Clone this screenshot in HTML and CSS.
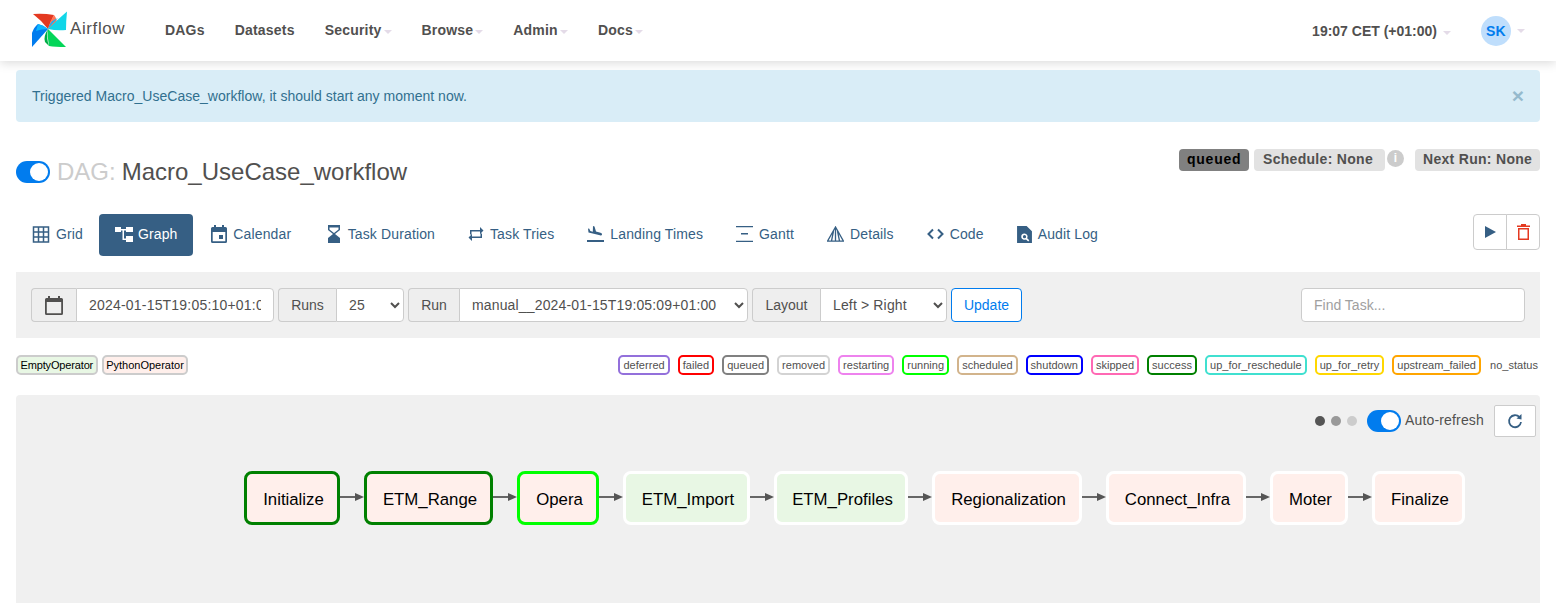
FILE: index.html
```html
<!DOCTYPE html>
<html lang="en">
<head>
  <meta charset="UTF-8" />
  <title>Macro_UseCase_workflow - Graph - Airflow</title>
  <link rel="stylesheet" href="styles.css">
</head>
<body>
  <nav class="navbar">
    <a class="brand">
      <svg class="logo" viewBox="0 0 36 36" width="36" height="36">
        <path fill="#e43921" d="M2 3 Q12 2 23 4 Q20 10 17 18 Q10 9 2 3Z"/>
        <path fill="#ff7557" d="M23 4 Q27 9 25 12 Q21 15 17 18 Q19 10 23 4Z"/>
        <path fill="#11d6e8" d="M36 .5 Q35 10 35 19 Q26 20 17 18 Q26 9 36 .5Z"/>
        <path fill="#0cb6ff" d="M27 7 Q21 12 17 18 Q19 11 23 9Z"/>
        <path fill="#04d659" d="M35 36 Q24 36 18 35 Q16 26 17 18 Q26 27 35 36Z"/>
        <path fill="#00ad46" d="M18 35 Q15 27 17 18 Q12 26 14 31Z"/>
        <path fill="#017cee" d="M1 36 Q1 29 1 22 Q3 16 7 13 Q12 14 17 18 Q9 27 1 36Z"/>
        <path fill="#0cb6ff" d="M7 13 Q12 14 17 18 Q10 18 5 20Z"/>
      </svg>
      <span class="brand-name">Airflow</span>
    </a>
    <ul class="menu">
      <li>DAGs</li>
      <li>Datasets</li>
      <li>Security<i class="caret"></i></li>
      <li>Browse<i class="caret"></i></li>
      <li>Admin<i class="caret"></i></li>
      <li>Docs<i class="caret"></i></li>
    </ul>
    <div class="nav-right">
      <span class="clock">19:07 CET (+01:00)<i class="caret caret-wide"></i></span>
      <span class="avatar">SK</span><i class="caret caret-wide"></i>
    </div>
  </nav>

  <main class="container">
    <div class="alert">
      <span>Triggered Macro_UseCase_workflow, it should start any moment now.</span>
      <span class="alert-close">&times;</span>
    </div>

    <header class="dag-header">
      <h1 class="dag-title">
        <span class="toggle"><span class="knob"></span></span>
        <span class="dag-prefix">DAG:</span> Macro_UseCase_workflow
      </h1>
      <div class="dag-meta">
        <span class="tag tag-queued">queued</span>
        <span class="tag tag-schedule">Schedule: None</span>
        <span class="info">i</span>
        <span class="tag tag-next">Next Run: None</span>
      </div>
    </header>

    <div class="tabs-row">
      <ul class="tabs">
        <li class="tab">
          <svg viewBox="0 0 18 18" width="18" height="18"><path fill="none" stroke="currentColor" stroke-width="1.5" d="M1.5 2h15v15h-15zM6.5 2v15M11.5 2v15M1.500 7h15M1.500 12h15"/></svg>
          Grid
        </li>
        <li class="tab active">
          <svg viewBox="0 0 18 16" width="18" height="16"><path fill="currentColor" d="M0 1h6v5H0zM11 1h7v5h-7zM11 10h7v6h-7zM6 3h5v1.500H9v8h2V14H7.500V4.500H6z"/></svg>
          Graph
        </li>
        <li class="tab">
          <svg class="icon-shift" viewBox="0 0 16 18" width="16" height="18"><path fill="currentColor" fill-rule="evenodd" d="M3 0h2v2h6V0h2v2h1.500Q16 2 16 3.500v13Q16 18 14.500 18h-13Q0 18 0 16.500v-13Q0 2 1.500 2H3zM1.700 7v9.300h12.600V7zM8 10h4v4H8z"/></svg>
          Calendar
        </li>
        <li class="tab">
          <svg class="icon-glass" viewBox="0 0 14 18" width="14" height="18"><path fill="currentColor" fill-rule="evenodd" d="M1 0h12v5L8 9l5 4v5H1v-5l5-4-5-4zM2.500 2.500v2l4.500 3.500 4.500-3.500v-2z"/></svg>
          Task Duration
        </li>
        <li class="tab">
          <svg viewBox="0 0 16 16" width="16" height="16"><path fill="currentColor" d="M2 4h10V1l3.500 3.500L12 8V5.500H3.500v3H2zM14 12H4v3L.5 11.500 4 8v2.500h8.500v-3H14z"/></svg>
          Task Tries
        </li>
        <li class="tab">
          <svg viewBox="0 0 17 16" width="17" height="16"><path fill="currentColor" d="M0 14h17v2H0zM6 0l1.500.5 1.500 5 4.500 1.300q2 .6 1.500 2-.4 1-2 .5L1.500 6.500l-.5-4 1.300.3 1 2.200 2.500.7z"/></svg>
          Landing Times
        </li>
        <li class="tab">
          <svg viewBox="0 0 17 16" width="17" height="16"><path fill="currentColor" d="M0 0h17v1.200H0zM5 7h7v1.500H5zM0 14.800h17V16H0z"/></svg>
          Gantt
        </li>
        <li class="tab">
          <svg viewBox="0.5 0 17 16" width="17" height="16"><path fill="none" stroke="currentColor" stroke-width="1.300" d="M9 1L1 15.200h16zM9 1v14.200M7 5l-2 10M11 5l2 10"/></svg>
          Details
        </li>
        <li class="tab">
          <svg viewBox="1 0 16 12" width="17" height="12"><path fill="none" stroke="currentColor" stroke-width="2" d="M6.500 1.500L2 6l4.500 4.500M11.500 1.500L16 6l-4.500 4.500"/></svg>
          Code
        </li>
        <li class="tab">
          <svg viewBox="0 0 14 16" width="15" height="17"><path fill="currentColor" fill-rule="evenodd" d="M0 0h9l5 5v11H0zM7 7a3 3 0 1 0 1.400 5.600L10.500 14.500l1-1-2-2A3 3 0 0 0 7 7zM7 8.500a1.500 1.500 0 1 1 0 3 1.500 1.500 0 0 1 0-3z"/></svg>
          Audit Log
        </li>
      </ul>
      <div class="actions">
        <button class="action-btn" type="button">
          <svg viewBox="0 0 11 12" width="11" height="12"><path fill="#365f84" d="M0 0l11 6-11 6z"/></svg>
        </button>
        <button class="action-btn" type="button">
          <svg viewBox="0 0 13 16" width="13" height="16"><path fill="#e43921" fill-rule="evenodd" d="M4 0h5v1.500h4V3H0V1.500h4zM1 4h11v12H1zM2.500 5.500v9h8v-9z"/></svg>
        </button>
      </div>
    </div>

    <form class="toolbar">
      <div class="input-group group-date">
        <span class="addon addon-icon">
          <svg viewBox="0 0 18 19" width="18" height="19"><path fill="#51504f" fill-rule="evenodd" d="M3 0h2v2h8V0h2v2h1.500Q18 2 18 3.500v14q0 1.500-1.500 1.500h-15Q0 19 0 17.500v-14Q0 2 1.500 2H3zM1.800 6v11.200h14.400V6z"/></svg>
        </span>
        <input class="field" type="text" value="2024-01-15T19:05:10+01:00">
      </div>
      <div class="input-group group-runs">
        <span class="addon">Runs</span>
        <select class="field"><option>25</option></select>
      </div>
      <div class="input-group group-run">
        <span class="addon">Run</span>
        <select class="field"><option>manual__2024-01-15T19:05:09+01:00</option></select>
      </div>
      <div class="input-group group-layout">
        <span class="addon">Layout</span>
        <select class="field"><option>Left &gt; Right</option></select>
      </div>
      <button class="update-btn" type="button">Update</button>
      <input class="find-task" type="text" placeholder="Find Task...">
    </form>

    <div class="legend">
      <div class="legend-group">
        <span class="legend-op op-empty">EmptyOperator</span>
        <span class="legend-op op-python">PythonOperator</span>
      </div>
      <div class="legend-group legend-states">
        <span class="state" style="border-color: mediumpurple">deferred</span>
        <span class="state" style="border-color: red">failed</span>
        <span class="state" style="border-color: gray">queued</span>
        <span class="state" style="border-color: lightgrey">removed</span>
        <span class="state" style="border-color: violet">restarting</span>
        <span class="state" style="border-color: lime">running</span>
        <span class="state" style="border-color: tan">scheduled</span>
        <span class="state" style="border-color: blue">shutdown</span>
        <span class="state" style="border-color: hotpink">skipped</span>
        <span class="state" style="border-color: green">success</span>
        <span class="state" style="border-color: turquoise">up_for_reschedule</span>
        <span class="state" style="border-color: gold">up_for_retry</span>
        <span class="state" style="border-color: orange">upstream_failed</span>
        <span class="state no-status">no_status</span>
      </div>
    </div>

    <section class="graph-panel">
      <div class="refresh-row">
        <span class="dot dot-1"></span>
        <span class="dot dot-2"></span>
        <span class="dot dot-3"></span>
        <span class="toggle toggle-refresh"><span class="knob"></span></span>
        <span class="refresh-label">Auto-refresh</span>
        <button class="refresh-btn" type="button">
          <svg viewBox="0 0 16 16" width="16" height="16"><path fill="none" stroke="#365f84" stroke-width="1.800" d="M12.500 4.200A6 6 0 1 0 14 9"/><path fill="#365f84" d="M9.500 5.500L14.500 1v5.500z"/></svg>
        </button>
      </div>
      <div class="graph">
        <div class="node node-python st-success w-initialize">Initialize</div>
        <svg class="edge" viewBox="0 0 24 10" width="24" height="10"><path stroke="#666" stroke-width="2" d="M0 5h17"/><path fill="#555" d="M15 1l9 4-9 4z"/></svg>
        <div class="node node-python st-success w-range">ETM_Range</div>
        <svg class="edge" viewBox="0 0 24 10" width="24" height="10"><path stroke="#666" stroke-width="2" d="M0 5h17"/><path fill="#555" d="M15 1l9 4-9 4z"/></svg>
        <div class="node node-python st-running w-opera">Opera</div>
        <svg class="edge" viewBox="0 0 24 10" width="24" height="10"><path stroke="#666" stroke-width="2" d="M0 5h17"/><path fill="#555" d="M15 1l9 4-9 4z"/></svg>
        <div class="node node-empty w-import">ETM_Import</div>
        <svg class="edge" viewBox="0 0 24 10" width="24" height="10"><path stroke="#666" stroke-width="2" d="M0 5h17"/><path fill="#555" d="M15 1l9 4-9 4z"/></svg>
        <div class="node node-empty w-profiles">ETM_Profiles</div>
        <svg class="edge" viewBox="0 0 24 10" width="24" height="10"><path stroke="#666" stroke-width="2" d="M0 5h17"/><path fill="#555" d="M15 1l9 4-9 4z"/></svg>
        <div class="node node-python w-region">Regionalization</div>
        <svg class="edge" viewBox="0 0 24 10" width="24" height="10"><path stroke="#666" stroke-width="2" d="M0 5h17"/><path fill="#555" d="M15 1l9 4-9 4z"/></svg>
        <div class="node node-python w-infra">Connect_Infra</div>
        <svg class="edge" viewBox="0 0 24 10" width="24" height="10"><path stroke="#666" stroke-width="2" d="M0 5h17"/><path fill="#555" d="M15 1l9 4-9 4z"/></svg>
        <div class="node node-python w-moter">Moter</div>
        <svg class="edge" viewBox="0 0 24 10" width="24" height="10"><path stroke="#666" stroke-width="2" d="M0 5h17"/><path fill="#555" d="M15 1l9 4-9 4z"/></svg>
        <div class="node node-python w-finalize">Finalize</div>
      </div>
    </section>
  </main>
</body>
</html>
```

FILE: styles.css
```css
* {
  box-sizing: border-box;
}
html, body {
  height: 100%;
  overflow: hidden;
}
body {
  margin: 0;
  font-family: "Liberation Sans", Arial, sans-serif;
  font-size: 14px;
  color: #51504f;
  background: #fff;
}

/* Top bar */
.navbar {
  display: flex;
  align-items: center;
  height: 61px;
  padding: 0 31px;
  background: #fff;
  box-shadow: 0 2px 10px rgba(0, 0, 0, 0.15);
}
.brand {
  display: flex;
  align-items: center;
  width: 134px;
  margin-top: -4px;
}
.logo {
  flex: none;
}
.brand-name {
  margin: 0 0 0 3px;
  font-size: 17px;
  letter-spacing: 0.6px;
}
.menu {
  display: flex;
  gap: 30px;
  margin: 0 0 2px;
  padding: 0;
  list-style: none;
  font-weight: bold;
  letter-spacing: 0.2px;
}
.caret {
  display: inline-block;
  margin-left: 2px;
  vertical-align: 1px;
  border-top: 4px solid #e4dbe8;
  border-left: 4px solid transparent;
  border-right: 4px solid transparent;
}
.caret-wide {
  margin-left: 6px;
}
.nav-right {
  display: flex;
  align-items: center;
  margin-left: auto;
  font-weight: bold;
}
.clock {
  margin-right: 30px;
}
.avatar {
  display: flex;
  align-items: center;
  justify-content: center;
  width: 30px;
  height: 30px;
  border-radius: 50%;
  background: #bfdefc;
  color: #017cee;
  letter-spacing: 0.3px;
}

.container {
  padding: 9px 16px 0;
}
.alert {
  display: flex;
  align-items: center;
  justify-content: space-between;
  height: 52px;
  padding: 0 16px;
  border-radius: 4px;
  background: #d9edf7;
  color: #31708f;
  letter-spacing: 0.02px;
}
.alert-close {
  font-size: 21px;
  font-weight: bold;
  color: #31708f;
  opacity: 0.4;
}

/* DAG title */
.dag-header {
  display: flex;
  justify-content: space-between;
  align-items: flex-start;
  margin-top: 27px;
  height: 65px;
}
.dag-title {
  display: flex;
  align-items: center;
  gap: 7px;
  margin: 9px 0 0;
  font-size: 24px;
  font-weight: normal;
  line-height: 28px;
}
.dag-prefix {
  margin-right: -1px;
  color: #ccc;
}
.toggle {
  display: inline-flex;
  justify-content: flex-end;
  align-items: center;
  width: 34px;
  height: 22px;
  padding: 2px;
  border-radius: 11px;
  background: #017cee;
}
.knob {
  width: 18px;
  height: 18px;
  border-radius: 50%;
  background: #fff;
}
.dag-meta {
  display: flex;
  align-items: center;
}
.tag {
  display: block;
  height: 22px;
  padding: 0 8px;
  border-radius: 4px;
  background: #e2e2e2;
  font-size: 14px;
  font-weight: bold;
  line-height: 21px;
  letter-spacing: 0.3px;
  white-space: nowrap;
}
.tag-queued {
  width: 70px;
  margin-right: 5px;
  background: #808080;
  color: #000;
  letter-spacing: 0.75px;
}
.tag-schedule {
  width: 131px;
  padding-left: 9px;
}
.tag-next {
  width: 125px;
}
.info {
  width: 17px;
  height: 17px;
  margin: -3px 11px 0 2px;
  border-radius: 50%;
  background: #ccc;
  color: #fff;
  font-size: 12px;
  font-weight: bold;
  line-height: 17px;
  text-align: center;
}

/* Tabs */
.tabs-row {
  display: flex;
  justify-content: space-between;
  align-items: flex-start;
  height: 58px;
}
.tabs {
  display: flex;
  gap: 1px;
  margin: 0;
  padding: 0;
  list-style: none;
}
.tab {
  display: flex;
  align-items: center;
  gap: 6px;
  height: 42px;
  padding: 0 16px 2px;
  border-radius: 4px;
  color: #365f84;
  letter-spacing: 0.13px;
}
.tab.active {
  gap: 5px;
  margin-left: -1px;
  padding-right: 15px;
  background: #365f84;
  color: #fff;
}
.icon-shift {
  margin-left: 1.8px;
}
.icon-glass {
  margin: 0 1px 0 2.5px;
}
.actions {
  display: flex;
}
.action-btn {
  display: flex;
  align-items: center;
  justify-content: center;
  width: 34px;
  height: 36px;
  padding: 0;
  border: 1px solid #ccc;
  background: #fff;
}
.action-btn:first-child {
  border-radius: 4px 0 0 4px;
}
.action-btn:last-child {
  margin-left: -1px;
  border-radius: 0 4px 4px 0;
}

/* Filter bar */
.toolbar {
  display: flex;
  align-items: center;
  gap: 4px;
  height: 66px;
  margin: 0;
  padding: 0 15px;
  background: #f0f0f0;
}
.input-group {
  display: flex;
  height: 34px;
}
.addon {
  display: flex;
  align-items: center;
  justify-content: center;
  border: 1px solid #ccc;
  border-right: 0;
  border-radius: 4px 0 0 4px;
  background: #eee;
}
.addon-icon {
  width: 45px;
}
.field {
  height: 34px;
  padding: 0 12px;
  border: 1px solid #ccc;
  border-radius: 0 4px 4px 0;
  background: #fff;
  color: #51504f;
  font: 14px "Liberation Sans", Arial, sans-serif;
}
select.field {
  padding-left: 8px;
  letter-spacing: 0.15px;
}
.group-date .field {
  width: 198px;
  letter-spacing: 0.2px;
}
.group-runs .addon {
  width: 58px;
}
.group-runs .field {
  width: 68px;
}
.group-run .addon {
  width: 51px;
}
.group-run .field {
  width: 289px;
}
.group-layout .addon {
  width: 68px;
}
.group-layout .field {
  width: 127px;
}
.update-btn {
  width: 71px;
  height: 34px;
  padding: 0;
  border: 1px solid #017cee;
  border-radius: 4px;
  background: #fff;
  color: #017cee;
  font: 14px "Liberation Sans", Arial, sans-serif;
}
.find-task {
  width: 224px;
  height: 34px;
  margin-left: auto;
  padding: 0 12px;
  border: 1px solid #ccc;
  border-radius: 4px;
  background: #fff;
  font: 14px "Liberation Sans", Arial, sans-serif;
}
.find-task::placeholder {
  color: #a0a0a0;
}

/* Legend */
.legend {
  display: flex;
  justify-content: space-between;
  margin-top: 17px;
  height: 40px;
  font-size: 11px;
}
.legend-group {
  display: flex;
  gap: 4px;
}
.legend-states {
  gap: 8px;
  letter-spacing: 0.03px;
}
.legend-op,
.state {
  height: 20px;
  padding: 0 3px;
  border: 2px solid #ccc;
  border-radius: 5px;
  line-height: 16px;
}
.legend-op {
  padding: 0 2.5px;
  color: #000;
}
.op-empty {
  background: #e8f7e4;
  letter-spacing: -0.15px;
}
.op-python {
  background: #ffefeb;
}
.no-status {
  margin-left: -4px;
  padding-right: 0;
  border-color: transparent;
}

/* Graph */
.graph-panel {
  height: 208px;
  padding: 10px 4px 0 0;
  border-radius: 4px 4px 0 0;
  background: #f0f0f0;
}
.refresh-row {
  display: flex;
  align-items: center;
  justify-content: flex-end;
  height: 32px;
}
.dot {
  width: 10px;
  height: 10px;
  margin-right: 6px;
  border-radius: 50%;
}
.dot-1 { background: #555; }
.dot-2 { background: #999; }
.dot-3 { background: #ccc; margin-right: 10px; }
.refresh-label {
  margin: 0 10px 2px 4px;
  letter-spacing: 0.17px;
}
.toggle-refresh {
  flex: none;
}
.refresh-btn {
  display: flex;
  align-items: center;
  justify-content: center;
  width: 42px;
  height: 32px;
  padding: 0;
  border: 1px solid #ccc;
  border-radius: 2px;
  background: #fff;
}
.graph {
  display: flex;
  align-items: center;
  margin: 34px 0 0 228px;
}
.edge {
  flex: none;
  margin-top: -2px;
}
.node {
  display: flex;
  align-items: center;
  justify-content: center;
  height: 54px;
  padding: 3px 0 0 3px;
  border: 3px solid #fff;
  border-radius: 8px;
  color: #000;
  font-size: 16.8px;
}
.node-python { background: #ffefeb; }
.node-empty { background: #e8f7e4; }
.st-success { border-color: green; }
.st-running { border-color: lime; }
.w-initialize { width: 96px; }
.w-range { width: 129px; }
.w-opera { width: 82px; }
.w-import { width: 127px; }
.w-profiles { width: 134px; }
.w-region { width: 150px; }
.w-infra { width: 140px; }
.w-moter { width: 78px; }
.w-finalize { width: 93px; }
```
